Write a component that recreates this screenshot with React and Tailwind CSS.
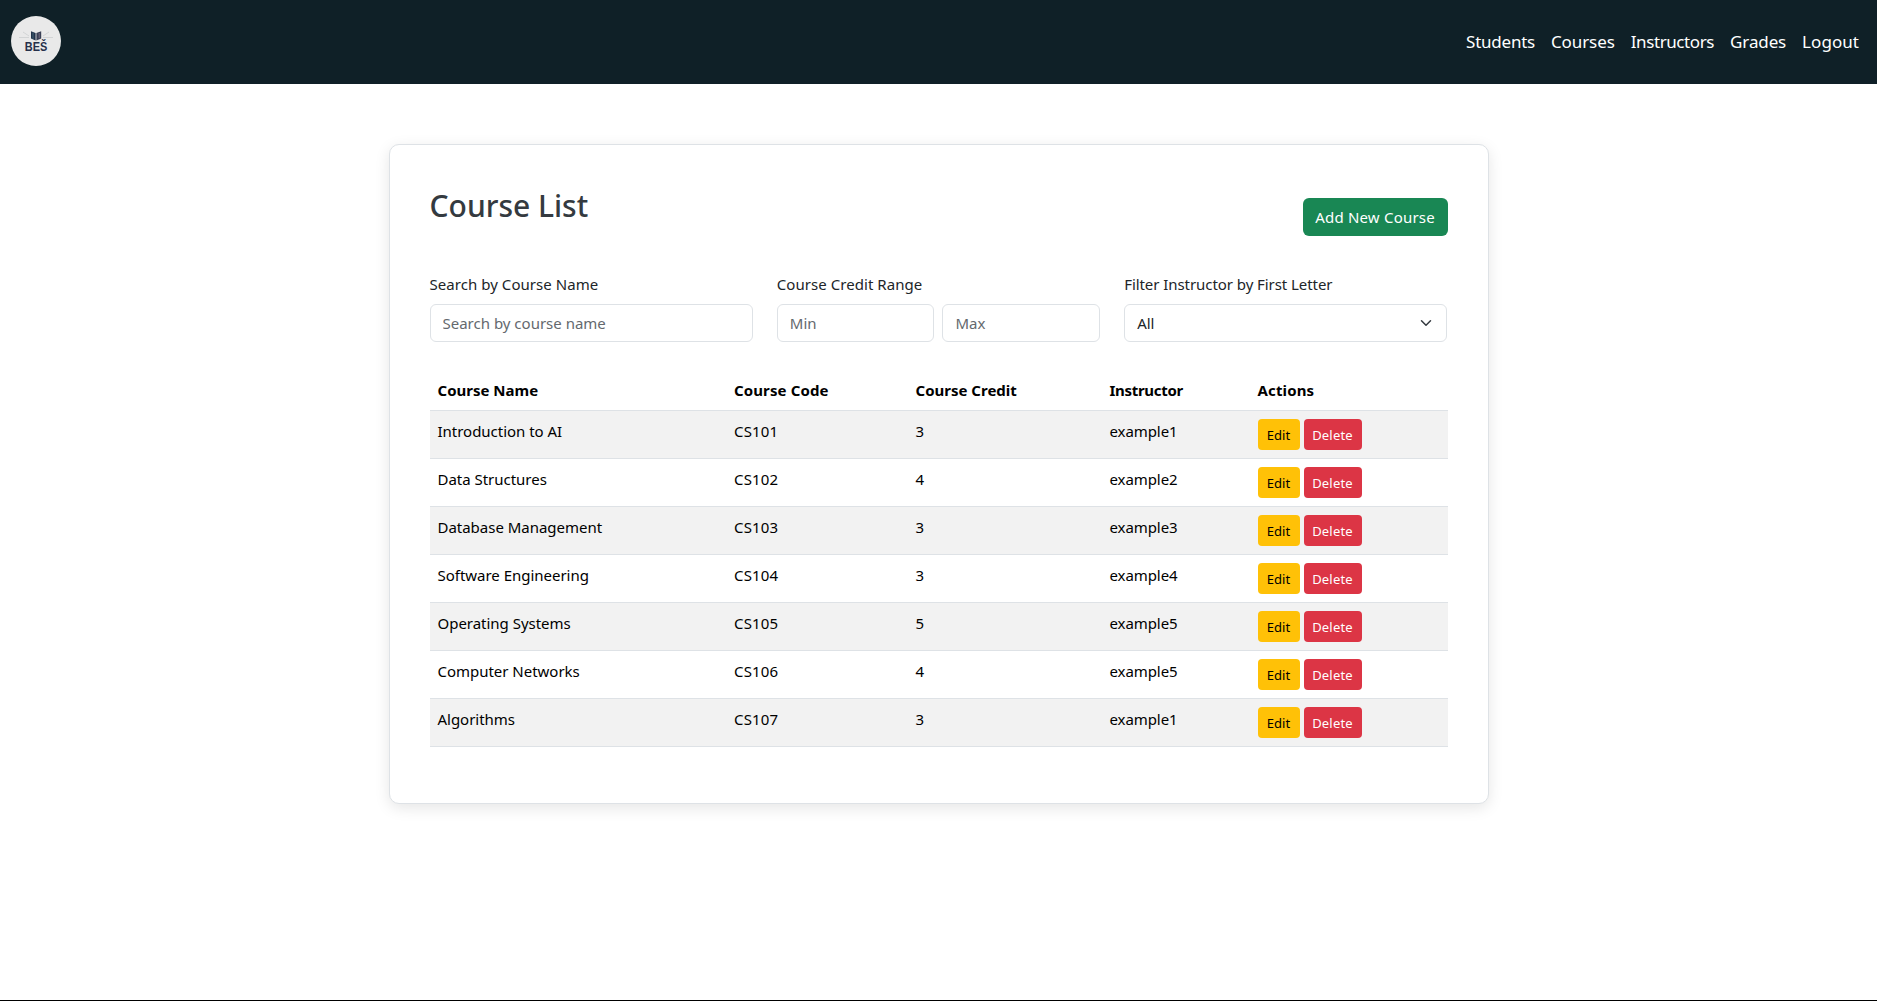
const navItems = [
  { label: "Students", cls: "tracking-[-0.24px]" },
  { label: "Courses", cls: "tracking-[-0.1px]" },
  { label: "Instructors", cls: "tracking-[-0.4px]" },
  { label: "Grades", cls: "tracking-[-0.13px]" },
  { label: "Logout", cls: "tracking-[0.05px]" },
];

const courses = [
  { name: "Introduction to AI", code: "CS101", credit: 3, instructor: "example1" },
  { name: "Data Structures", code: "CS102", credit: 4, instructor: "example2" },
  { name: "Database Management", code: "CS103", credit: 3, instructor: "example3" },
  { name: "Software Engineering", code: "CS104", credit: 3, instructor: "example4" },
  { name: "Operating Systems", code: "CS105", credit: 5, instructor: "example5" },
  { name: "Computer Networks", code: "CS106", credit: 4, instructor: "example5" },
  { name: "Algorithms", code: "CS107", credit: 3, instructor: "example1" },
];

const inputClass =
  "h-[38px] w-full min-w-0 rounded-md border border-[#dee2e6] bg-white px-3 text-[15px] text-[#212529] placeholder:text-[#64696e] placeholder:opacity-100 outline-none";

function Logo() {
  return (
    <svg className="size-[50px]" viewBox="0 0 50 50" role="img">
      <circle cx="25" cy="25" r="25" fill="#e9e9e9" />
      <g stroke="#cfd1d3" strokeWidth="0.9" fill="none">
        <path d="M8 21.5h10M12 16l6 4M32 21.5h10M38 16l-6 4" />
      </g>
      <path d="M20 15.2l4.6 1.8v7.4l-4.6-1.8z" fill="#22324a" />
      <path d="M25.4 17l4.8-1.8v7.4l-4.8 1.8z" fill="#3a4055" />
      <path d="M22 16.5v6.4" stroke="#4d7183" strokeWidth="0.8" />
      <path d="M28.2 17v5.2" stroke="#7b6f86" strokeWidth="0.9" />
      <text
        x="25"
        y="35"
        textAnchor="middle"
        textLength="22.5"
        lengthAdjust="spacingAndGlyphs"
        fill="#26304a"
        className="font-['Liberation_Sans',sans-serif] text-[12.5px] font-bold"
      >
        BEŠ
      </text>
    </svg>
  );
}

function NavBar() {
  return (
    <header className="flex h-[84px] items-center justify-between bg-[#0f2027] pr-[18px] pl-[11px]">
      <div className="pb-0.5">
        <Logo />
      </div>
      <nav className="flex gap-4 text-[17px] leading-6 text-white">
        {navItems.map((item) => (
          <a key={item.label} href="#" className={item.cls}>
            {item.label}
          </a>
        ))}
      </nav>
    </header>
  );
}

function Field({ label, labelClass = "", children }) {
  return (
    <div>
      <label className={"mb-2 block leading-6 text-[#212529] " + labelClass}>{label}</label>
      {children}
    </div>
  );
}

function CourseTable() {
  return (
    <table className="w-full table-fixed border-separate border-spacing-0 text-left leading-6 text-black">
      <colgroup>
        <col className="w-[296.5px]" />
        <col className="w-[181.5px]" />
        <col className="w-[194px]" />
        <col className="w-[148px]" />
        <col />
      </colgroup>
      <thead>
        <tr className="[&>th]:border-b [&>th]:border-[#dee2e6] [&>th]:p-2 [&>th]:font-bold">
          <th>Course Name</th>
          <th className="tracking-[0.12px]">Course Code</th>
          <th>Course Credit</th>
          <th className="tracking-[-0.3px]">Instructor</th>
          <th className="tracking-[0.13px]">Actions</th>
        </tr>
      </thead>
      <tbody>
        {courses.map((c) => (
          <tr
            key={c.code}
            className="odd:bg-[#f2f2f2] [&>td]:h-12 [&>td]:border-b [&>td]:border-[#dee2e6] [&>td]:p-2 [&>td]:align-top"
          >
            <td className="tracking-[-0.02px]">{c.name}</td>
            <td className="tracking-[0.15px]">{c.code}</td>
            <td>{c.credit}</td>
            <td className="tracking-[-0.08px]">{c.instructor}</td>
            <td>
              <div className="flex gap-1 text-[13px] leading-[21px]">
                <button className="h-[31px] w-[42px] rounded bg-[#ffc107] pt-px text-black">Edit</button>
                <button className="h-[31px] w-[58px] rounded bg-[#dc3545] pt-px tracking-[0.2px] text-white">
                  Delete
                </button>
              </div>
            </td>
          </tr>
        ))}
      </tbody>
    </table>
  );
}

export default function App() {
  return (
    <div className="flex h-[1001px] flex-col overflow-hidden border-b border-black bg-white font-['Noto_Sans',sans-serif] text-[15px]">
      <NavBar />
      <main className="mx-auto mt-[60px] h-[660px] w-[1100px] rounded-[10px] border border-[#dee2e6] bg-white p-10 shadow-[0_4px_15px_rgba(0,0,0,0.1)]">
        <div className="flex h-[87px] justify-between">
          <h2 className="pt-0.5 text-[30px] leading-[38px] font-medium text-[#343a40]">Course List</h2>
          <button className="mt-[13px] h-[38px] w-[145px] rounded-md bg-[#198754] tracking-[0.2px] text-white">
            Add New Course
          </button>
        </div>
        <div className="grid grid-cols-3 gap-6">
          <Field label="Search by Course Name" labelClass="tracking-[0.05px]">
            <input className={inputClass} placeholder="Search by course name" />
          </Field>
          <Field label="Course Credit Range" labelClass="tracking-[0.05px]">
            <div className="flex gap-2">
              <input className={inputClass} placeholder="Min" />
              <input className={inputClass} placeholder="Max" />
            </div>
          </Field>
          <Field label="Filter Instructor by First Letter" labelClass="tracking-[-0.06px]">
            <div className="flex h-[38px] w-[322.5px] items-center justify-between rounded-md border border-[#dee2e6] px-3 text-[#212529]">
              <span>All</span>
              <svg className="h-3 w-4" viewBox="0 0 16 16" fill="none">
                <path
                  d="m2 5 6 6 6-6"
                  stroke="#343a40"
                  strokeWidth="2"
                  strokeLinecap="round"
                  strokeLinejoin="round"
                />
              </svg>
            </div>
          </Field>
        </div>
        <div className="mt-7">
          <CourseTable />
        </div>
      </main>
    </div>
  );
}
